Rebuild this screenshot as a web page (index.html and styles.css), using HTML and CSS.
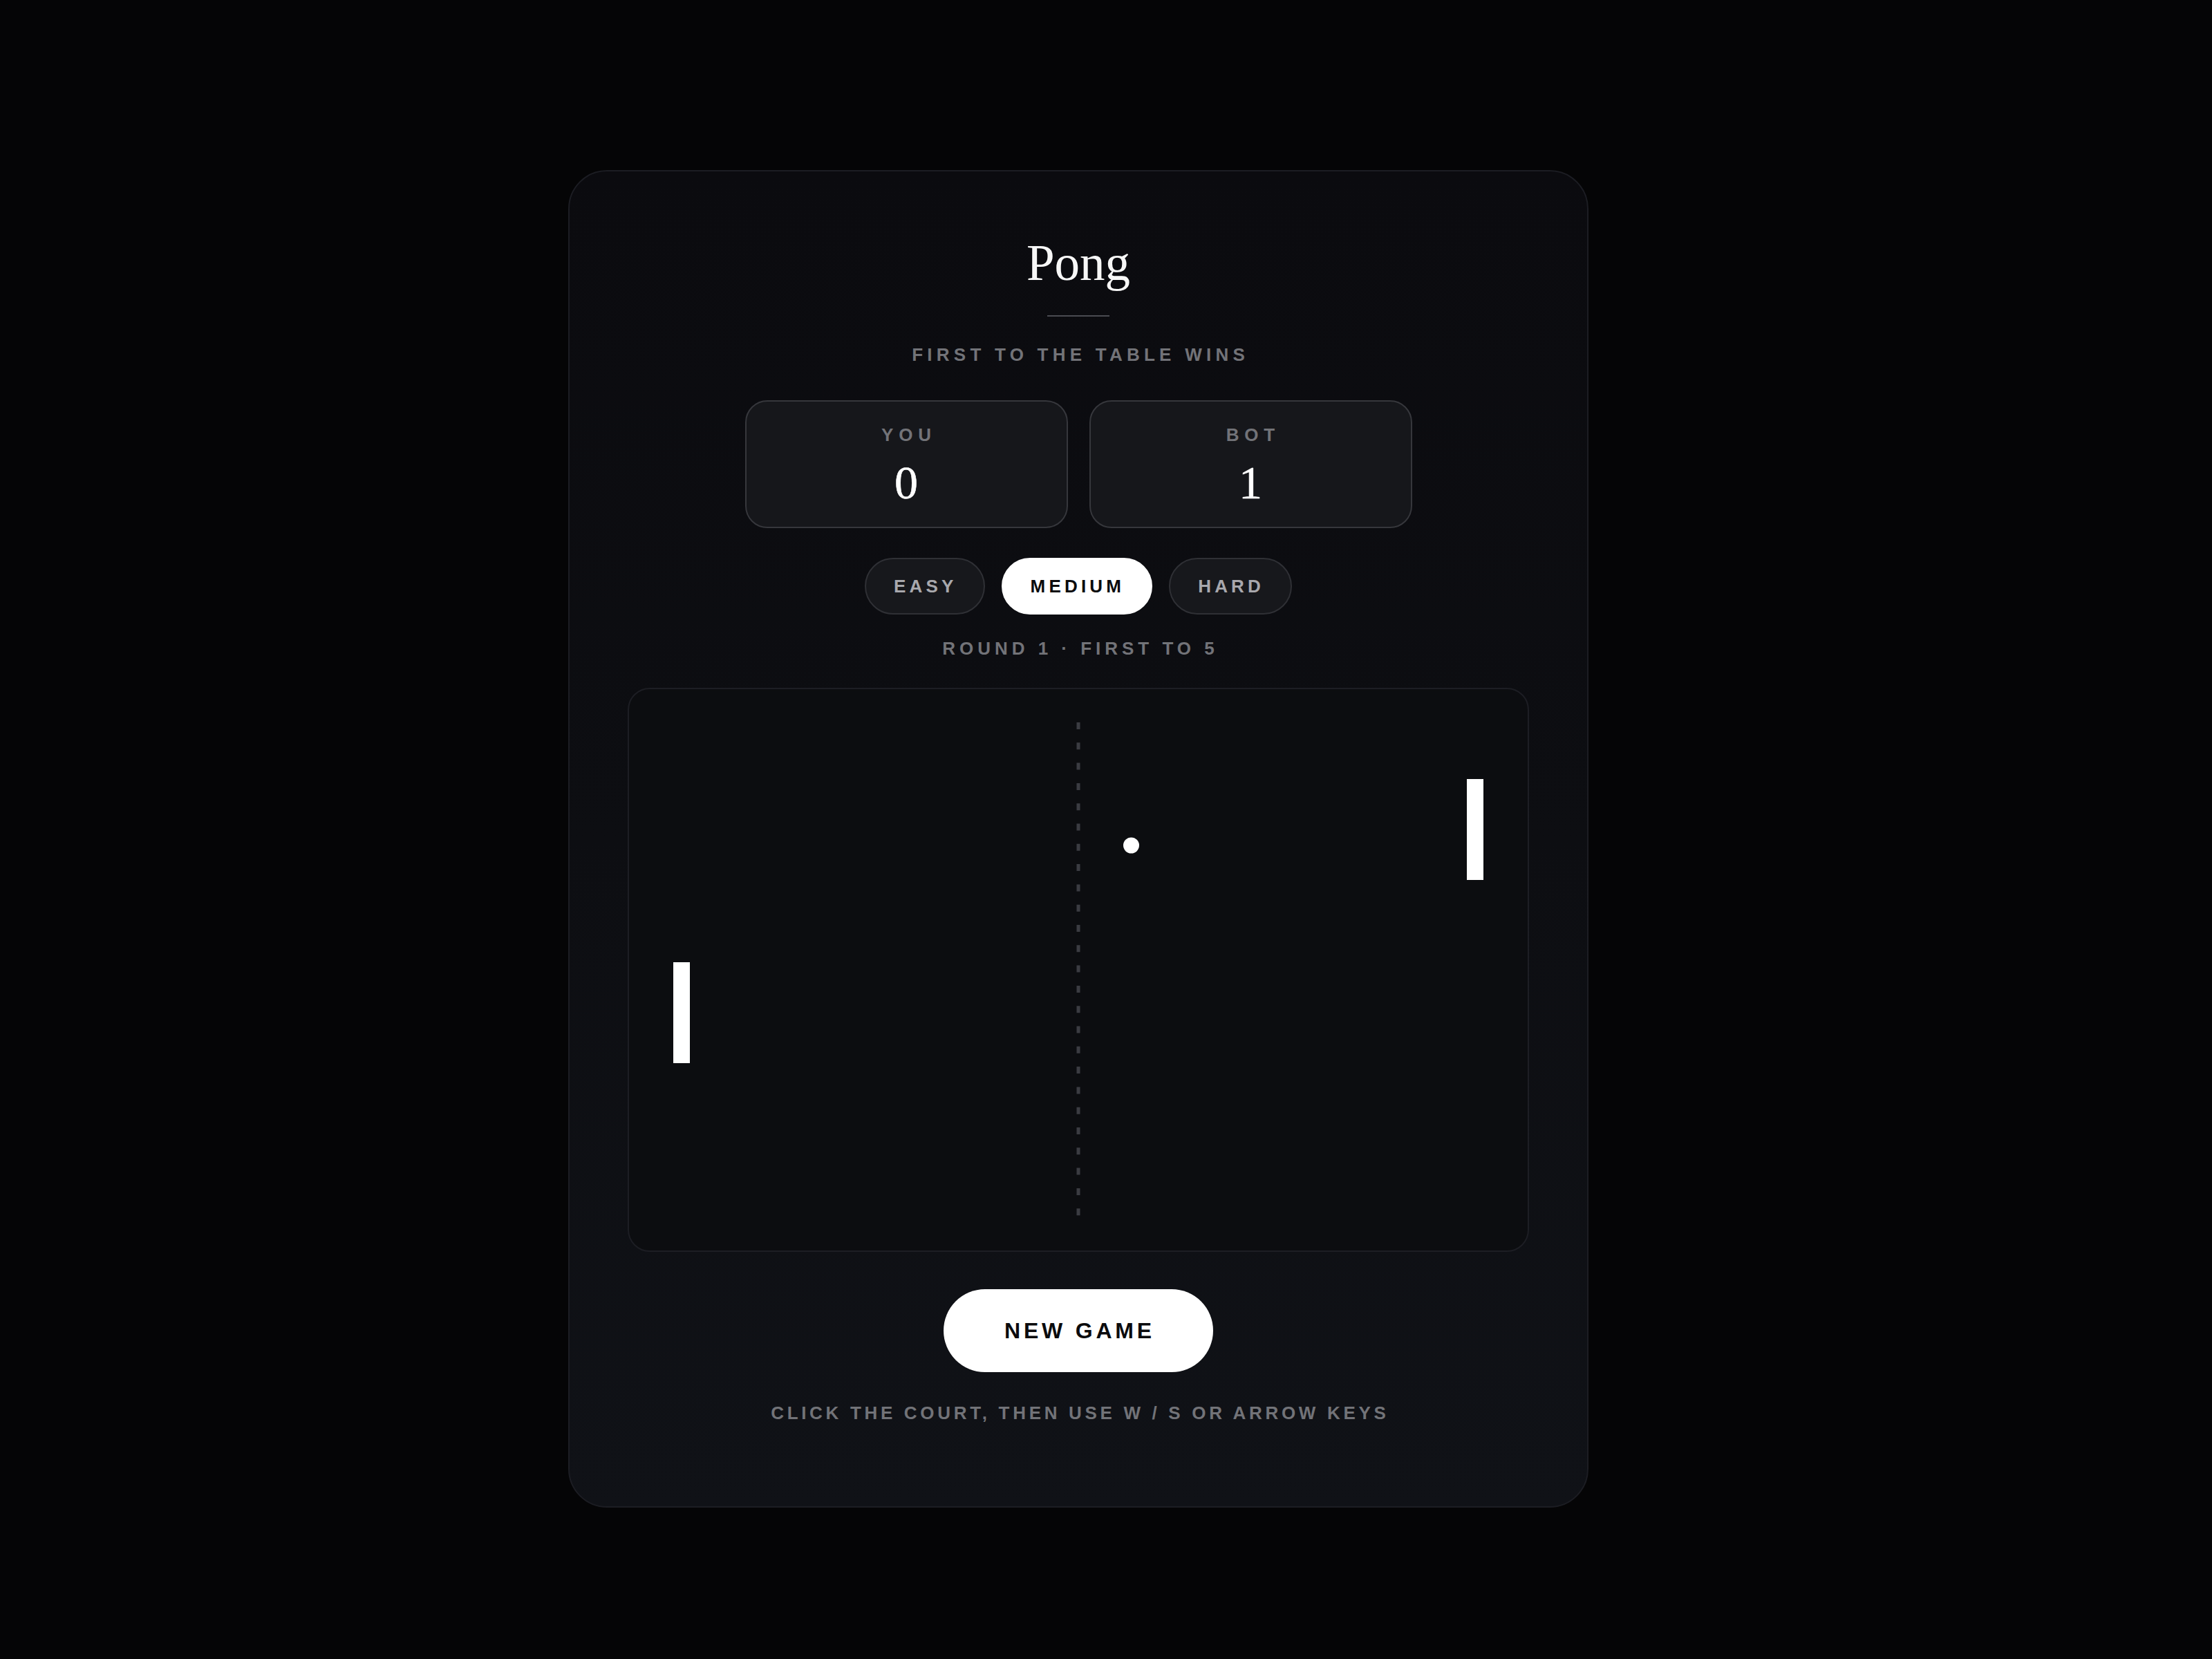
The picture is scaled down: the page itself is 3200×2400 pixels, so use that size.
FILE: index.html
```html
<!DOCTYPE html>
<html lang="en">
<head>
<meta charset="utf-8">
<title>Pong</title>
<link rel="stylesheet" href="styles.css">
</head>
<body>
<main class="card">
  <h1 class="title">Pong</h1>
  <div class="divider"></div>
  <p class="subtitle">First to the table wins</p>
  <section class="scores">
    <div class="score-box">
      <span class="score-label">You</span>
      <span class="score-value">0</span>
    </div>
    <div class="score-box">
      <span class="score-label">Bot</span>
      <span class="score-value">1</span>
    </div>
  </section>
  <div class="levels">
    <button class="level">Easy</button>
    <button class="level active">Medium</button>
    <button class="level">Hard</button>
  </div>
  <p class="round">Round 1 · First to 5</p>
  <div class="court">
    <svg class="court-svg" viewBox="0 0 1300 810" width="1300" height="810">
      <line x1="650" y1="48" x2="650" y2="762" stroke="#3b3c42" stroke-width="5" stroke-dasharray="10 19.3"/>
      <rect x="64" y="395" width="24" height="146" fill="#ffffff"/>
      <rect x="1212" y="130" width="24" height="146" fill="#ffffff"/>
      <circle cx="726.5" cy="226" r="11.5" fill="#ffffff"/>
    </svg>
  </div>
  <button class="new-game">New Game</button>
  <p class="hint">Click the court, then use W / S or arrow keys</p>
</main>
</body>
</html>
```

FILE: styles.css
```css
* {
  box-sizing: border-box;
}

html, body {
  margin: 0;
  padding: 0;
}

body {
  min-height: 100vh;
  background: #050506;
  display: flex;
  justify-content: center;
  align-items: flex-start;
  padding: 246px 80px 0 0;
  font-family: "Liberation Sans", Arial, sans-serif;
}

.card {
  width: 1476px;
  border: 2px solid #1c1d23;
  border-radius: 56px;
  background: linear-gradient(180deg, #0b0b0f 0%, #0d0e12 50%, #101217 100%);
  padding: 96px 84px 122px;
  display: flex;
  flex-direction: column;
  align-items: center;
}

.title {
  margin: 0;
  font-family: "Liberation Serif", "Times New Roman", serif;
  font-weight: normal;
  font-size: 73px;
  line-height: 1;
  color: #f7f7f7;
}

.divider {
  width: 90px;
  height: 2px;
  background: #4a4b51;
  margin-top: 39px;
}

.subtitle,
.round,
.hint {
  margin: 0;
  font-size: 26px;
  line-height: 1;
  font-weight: 700;
  text-transform: uppercase;
  color: #727378;
}

.subtitle {
  margin-top: 42px;
  letter-spacing: 0.24em;
  padding-left: 0.24em;
}

.scores {
  margin-top: 53px;
  display: flex;
  gap: 31px;
}

.score-box {
  width: 467px;
  height: 185px;
  border: 2px solid #36373c;
  border-radius: 32px;
  background: #16171b;
  display: flex;
  flex-direction: column;
  align-items: center;
  padding-top: 35px;
}

.score-label {
  font-size: 26px;
  line-height: 1;
  font-weight: 700;
  letter-spacing: 0.3em;
  padding-left: 0.3em;
  text-transform: uppercase;
  color: #727378;
}

.score-value {
  margin-top: 22px;
  font-family: "Liberation Serif", "Times New Roman", serif;
  font-size: 68px;
  line-height: 1;
  color: #ffffff;
  -webkit-text-stroke: 0.6px #ffffff;
}

.levels {
  margin-top: 43px;
  display: flex;
  gap: 24px;
}

.level {
  font-family: "Liberation Sans", Arial, sans-serif;
  font-size: 26px;
  line-height: 1;
  font-weight: 700;
  letter-spacing: 0.2em;
  text-transform: uppercase;
  padding: 26px 38px 26px 40px;
  border: 2px solid #2f3035;
  border-radius: 999px;
  background: #17181c;
  color: #a8a8ad;
}

.level.active {
  background: #ffffff;
  border-color: #ffffff;
  color: #0b0b0d;
}

.round {
  margin-top: 36px;
  letter-spacing: 0.23em;
  padding-left: 0.23em;
}

.court {
  margin-top: 44px;
  width: 1304px;
  height: 816px;
  border: 2px solid #1d1e24;
  border-radius: 32px;
  background: #0c0d10;
  overflow: hidden;
}

.court-svg {
  display: block;
}

.new-game {
  margin-top: 54px;
  font-family: "Liberation Sans", Arial, sans-serif;
  font-size: 32px;
  line-height: 1;
  font-weight: 700;
  letter-spacing: 0.15em;
  text-transform: uppercase;
  padding: 44px 84px 44px 88px;
  border: none;
  border-radius: 999px;
  background: #ffffff;
  color: #0b0b0d;
}

.hint {
  margin-top: 46px;
  letter-spacing: 0.18em;
  padding-left: 0.18em;
}
```
